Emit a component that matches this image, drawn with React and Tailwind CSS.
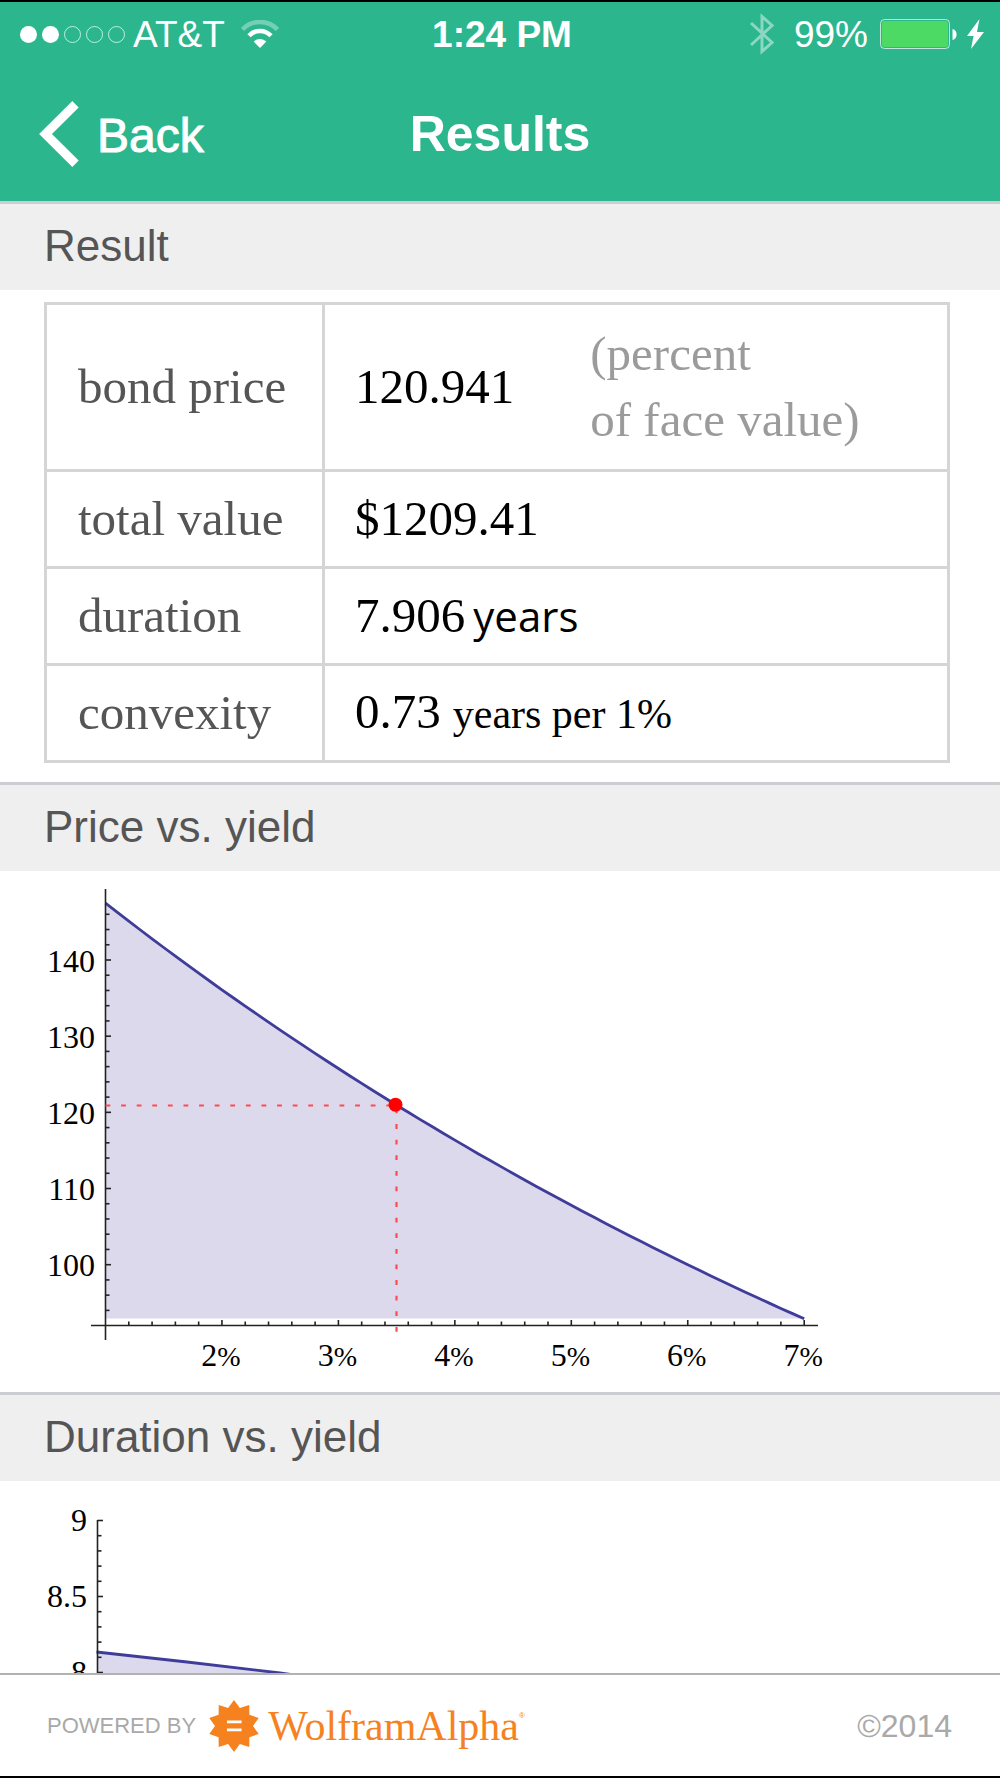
import React from 'react';

const SERIF = '"Liberation Serif", serif';

// Bond behind the result: 6% coupon, 10 years, paid twice a year
const bondPrice = (yieldPct) => {
  const r = yieldPct / 200;
  let price = 100 / Math.pow(1 + r, 20);
  for (let i = 1; i <= 20; i++) {
    price += 3 / Math.pow(1 + r, i);
  }
  return price;
};

const range = (from, to) => Array.from({ length: to - from + 1 }, (_, i) => from + i);

const StatusBar = () => (
  <div className="grid grid-cols-[1fr_auto_1fr] items-center h-16 pl-5 pr-4 text-[37px] leading-none">
    <div className="flex items-center">
      <div className="flex gap-[5px] mr-2">
        {[true, true, false, false, false].map((on, i) => (
          <span
            key={i}
            className={on ? 'size-[17px] rounded-full bg-white' : 'size-[17px] rounded-full border border-white/70'}
          />
        ))}
      </div>
      <span className="mr-4">AT&amp;T</span>
      <svg width="38" height="28" viewBox="0 0 38 28" fill="none" stroke="white">
        <path d="M1.5 9.5 C11 -0.6 27 -0.6 36.500 9.500" strokeWidth="4.500" opacity="0.35" />
        <path d="M8 15.800 C14 9.300 24 9.300 30 15.800" strokeWidth="4.500" />
        <path d="M19 28 L12.700 21.600 C16.200 18 21.800 18 25.300 21.600 Z" fill="white" stroke="none" />
      </svg>
    </div>
    <span className="font-bold">1:24 PM</span>
    <div className="flex items-center justify-end">
      <svg className="mr-5" width="24" height="42" viewBox="0 0 24 42" fill="none" stroke="white" strokeWidth="3" opacity="0.45">
        <path d="M1 10 L22 29.500 L12 38.500 V3.500 L22 12.500 L1 32" />
      </svg>
      <span className="mr-3">99%</span>
      <svg width="104" height="30" viewBox="0 0 104 30">
        <rect x="0.500" y="0.500" width="69" height="29" rx="4" fill="none" stroke="white" strokeOpacity="0.7" />
        <rect x="2" y="2" width="66" height="26" rx="2.500" fill="#4cd964" />
        <path d="M72.500 10 C78 11 78 20 72.500 21 Z" fill="white" />
        <path d="M99.500 0 L87 17 H93.500 L91 30 L104 13 H97 Z" fill="white" />
      </svg>
    </div>
  </div>
);

const NavBar = () => (
  <div className="grid grid-cols-[1fr_auto_1fr] items-center h-[135px] px-[39px] text-[50px] leading-none">
    <button type="button" className="flex items-center gap-[18px] justify-self-start text-[48px] [-webkit-text-stroke:1px_white]">
      <svg width="40" height="66" viewBox="0 0 40 66" fill="none" stroke="white" strokeWidth="9">
        <path d="M36.500 3.200 L6.500 33 L36.500 62.800" />
      </svg>
      <span className="pt-1">Back</span>
    </button>
    <h1 className="font-bold">Results</h1>
  </div>
);

const Section = ({ title, children }) => (
  <section>
    <h2 className="h-[89px] pl-11 border-t-3 border-[#cacdd1] bg-[#efefef] text-[#555555] text-[44px] leading-[84px]">
      {title}
    </h2>
    {children}
  </section>
);

const rows = [
  { label: 'total value', value: '$1209.41' },
  { label: 'duration', value: '7.906', unit: <span className="ml-2 text-[42px] font-['Open_Sans',sans-serif]">years</span> },
  { label: 'convexity', value: '0.73', unit: <span className="ml-3 text-[42px]">years per 1%</span> },
];

const labelCell = 'w-[278px] border-3 border-[#d5d5d5] pl-[31px] text-left font-normal text-[#555555]';
const valueCell = 'border-3 border-[#d5d5d5] pl-[30px]';

const ResultTable = () => (
  <div className="pl-11 pr-[50px] pt-3 pb-[19px]">
    <table className="w-full table-fixed border-collapse font-['Liberation_Serif',serif] text-[49px] leading-[66px] text-black">
      <tbody>
        <tr className="h-[167px]">
          <th scope="row" className={labelCell}>bond price</th>
          <td className={valueCell}>
            <div className="flex items-center gap-[76px]">
              <span>120.941</span>
              <span className="text-[#9b9b9b]">
                (percent
                <br />
                of face value)
              </span>
            </div>
          </td>
        </tr>
        {rows.map((row) => (
          <tr key={row.label} className="h-[97px]">
            <th scope="row" className={labelCell}>{row.label}</th>
            <td className={valueCell}>
              {row.value}
              {row.unit}
            </td>
          </tr>
        ))}
      </tbody>
    </table>
  </div>
);

const PriceChart = () => {
  const x = (pct) => 105.5 + (pct - 1) * 116.45;
  const y = (price) => 89 + (140 - price) * 7.617;
  const curve = range(0, 60)
    .map((i) => 1 + i / 10)
    .map((pct) => `${x(pct).toFixed(1)},${y(bondPrice(pct)).toFixed(1)}`)
    .join(' ');

  return (
    <svg className="block w-full" viewBox="0 0 1000 521" fontFamily={SERIF} fontSize="32">
      <polygon points={`105.5,447.5 ${curve} 804,447.5`} fill="#dcd9ec" />
      <polyline points={curve} fill="none" stroke="#3f3d99" strokeWidth="2.8" />
      <g stroke="#222222" strokeWidth="1.6">
        <path d="M105.5 18 V469 M91 454.500 H818" />
        {range(47, 73).map((n) => (
          <line key={n} x1="105.5" x2={n % 5 === 0 ? 111 : 109.5} y1={y(n * 2)} y2={y(n * 2)} />
        ))}
        {range(6, 35).map((n) => (
          <line key={n} x1={x(n / 5)} x2={x(n / 5)} y1="454.5" y2={n % 5 === 0 ? 449 : 450.5} />
        ))}
      </g>
      <g stroke="#ff4a50" strokeWidth="2.2" strokeDasharray="4.8 10.8">
        <path d="M105.5 234.500 H396" />
        <path d="M396.500 237.500 V463" />
      </g>
      <circle cx="395.500" cy="233.800" r="7" fill="#ff0000" />
      {[140, 130, 120, 110, 100].map((v) => (
        <text key={v} x="95" y={y(v) + 11.5} textAnchor="end">{v}</text>
      ))}
      {range(2, 7).map((v) => (
        <text key={v} x={x(v) - 1} y="495" textAnchor="middle">
          {v}
          <tspan fontSize="28">%</tspan>
        </text>
      ))}
    </svg>
  );
};

const DurationChart = () => {
  const y = (years) => 39.5 + (9 - years) * 152;
  return (
    <svg className="block w-full" viewBox="0 0 1000 521" fontFamily={SERIF} fontSize="32">
      <path d="M97.500 171 L187 181 L280 192 L804 262 V448 H97.500 Z" fill="#dcd9ec" />
      <path d="M96.500 171 L187 181 L280 192 L804 262" fill="none" stroke="#3f3d99" strokeWidth="2.8" />
      <g stroke="#222222" strokeWidth="1.6">
        <path d="M97.500 39 V469" />
        {range(0, 20).map((n) => (
          <line key={n} x1="97.5" x2={n % 5 === 0 ? 103 : 101.5} y1={y(9 - n / 10)} y2={y(9 - n / 10)} />
        ))}
      </g>
      {[9, 8.5, 8].map((v) => (
        <text key={v} x="87" y={y(v) + 10.5} textAnchor="end">{v}</text>
      ))}
    </svg>
  );
};

// Ten-pointed star, inner radius a bit under 3/4 of the outer one
const starPoints = range(0, 19)
  .map((i) => {
    const r = i % 2 === 0 ? 26 : 19;
    const a = (i * Math.PI) / 10;
    return `${(26 + r * Math.sin(a)).toFixed(2)},${(26 - r * Math.cos(a)).toFixed(2)}`;
  })
  .join(' ');

const Footer = () => (
  <footer className="flex items-center justify-between h-[103px] shrink-0 pl-[47px] pr-12 border-t-2 border-[#b2b2b2] bg-white text-[#a9a9a9]">
    <div className="flex items-center">
      <span className="text-[22px]">POWERED BY</span>
      <a href="#wolframalpha" className="flex items-center ml-3 text-[#f6821f]">
        <svg width="52" height="52" viewBox="0 0 52 52">
          <polygon points={starPoints} fill="#f6821f" />
          <path d="M19 20.500 H33.500 V23.300 H19 Z M19 28.500 H33.500 V31.300 H19 Z" fill="white" />
        </svg>
        <span className="ml-2 font-['Liberation_Serif',serif] text-[42px] leading-none">WolframAlpha</span>
        <span className="mb-5 text-[8px] leading-none">®</span>
      </a>
    </div>
    <span className="text-[32px] leading-none">©2014</span>
  </footer>
);

const App = () => {
  return (
    <div className="flex flex-col h-screen border-y-2 border-black bg-white font-['Liberation_Sans',Arial,sans-serif]">
      <header className="shrink-0 bg-[#2cb68e] text-white">
        <StatusBar />
        <NavBar />
      </header>
      <main className="flex-1 min-h-0 overflow-hidden">
        <Section title="Result">
          <ResultTable />
        </Section>
        <Section title="Price vs. yield">
          <PriceChart />
        </Section>
        <Section title="Duration vs. yield">
          <DurationChart />
        </Section>
      </main>
      <Footer />
    </div>
  );
};

export default App;
